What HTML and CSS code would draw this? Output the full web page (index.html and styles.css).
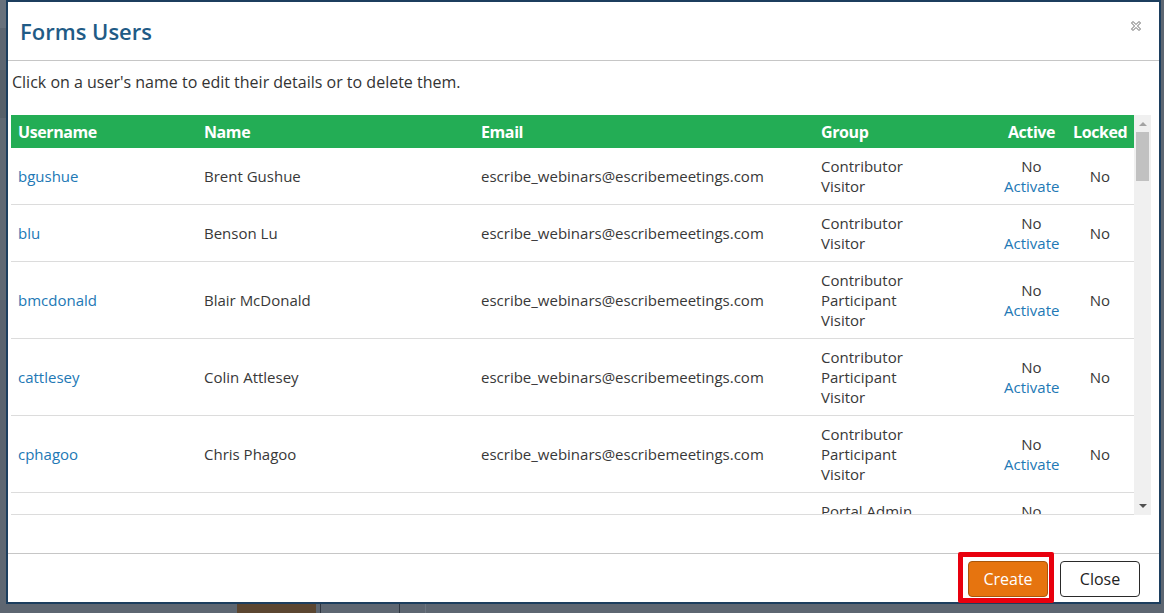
FILE: index.html
```html
<!DOCTYPE html>
<html>
<head>
	<meta charset="utf-8">
	<title>Forms Users</title>
	<link rel="stylesheet" href="styles.css">
</head>
<body>
	<div class="screen">
		<div class="stage">
			<div class="page-edge"></div>
			<section class="dialog">
				<header class="dialog-title">
					<h2>Forms Users</h2>
					<button class="close-x" title="Close">
						<svg width="12" height="12" viewBox="0 0 12 12">
							<polygon points="1.5,3 3,1.5 6,4.5 9,1.5 10.5,3 7.5,6 10.5,9 9,10.5 6,7.5 3,10.5 1.5,9 4.5,6" fill="#fff" stroke="#6a6a6a" stroke-width="1" stroke-linejoin="round"/>
						</svg>
					</button>
				</header>
				<div class="dialog-body">
					<p class="hint">Click on a user's name to edit their details or to delete them.</p>
					<div class="grid">
						<div class="grid-view">
							<table class="users">
								<colgroup>
									<col class="c-user"><col class="c-name"><col class="c-mail"><col class="c-group"><col class="c-active"><col class="c-locked">
								</colgroup>
								<thead>
									<tr>
										<th>Username</th>
										<th>Name</th>
										<th>Email</th>
										<th>Group</th>
										<th class="mid">Active</th>
										<th class="mid">Locked</th>
									</tr>
								</thead>
								<tbody>
									<tr>
										<td><a href="#">bgushue</a></td>
										<td>Brent Gushue</td>
										<td>escribe_webinars@escribemeetings.com</td>
										<td>Contributor<br>Visitor</td>
										<td class="mid">No<br><a href="#">Activate</a></td>
										<td class="mid">No</td>
									</tr>
									<tr>
										<td><a href="#">blu</a></td>
										<td>Benson Lu</td>
										<td>escribe_webinars@escribemeetings.com</td>
										<td>Contributor<br>Visitor</td>
										<td class="mid">No<br><a href="#">Activate</a></td>
										<td class="mid">No</td>
									</tr>
									<tr>
										<td><a href="#">bmcdonald</a></td>
										<td>Blair McDonald</td>
										<td>escribe_webinars@escribemeetings.com</td>
										<td>Contributor<br>Participant<br>Visitor</td>
										<td class="mid">No<br><a href="#">Activate</a></td>
										<td class="mid">No</td>
									</tr>
									<tr>
										<td><a href="#">cattlesey</a></td>
										<td>Colin Attlesey</td>
										<td>escribe_webinars@escribemeetings.com</td>
										<td>Contributor<br>Participant<br>Visitor</td>
										<td class="mid">No<br><a href="#">Activate</a></td>
										<td class="mid">No</td>
									</tr>
									<tr>
										<td><a href="#">cphagoo</a></td>
										<td>Chris Phagoo</td>
										<td>escribe_webinars@escribemeetings.com</td>
										<td>Contributor<br>Participant<br>Visitor</td>
										<td class="mid">No<br><a href="#">Activate</a></td>
										<td class="mid">No</td>
									</tr>
									<tr>
										<td></td>
										<td></td>
										<td></td>
										<td>Portal Admin<br>Visitor</td>
										<td class="mid">No<br><a href="#">Activate</a></td>
										<td class="mid"></td>
									</tr>
								</tbody>
							</table>
						</div>
						<div class="scrollbar">
							<span class="arrow up"></span>
							<span class="track"><span class="thumb"></span></span>
							<span class="arrow down"></span>
						</div>
					</div>
				</div>
				<footer class="dialog-footer">
					<button class="btn btn-create">Create<span class="callout"></span></button>
					<button class="btn btn-close">Close</button>
				</footer>
			</section>
			<div class="page-gap"></div>
		</div>
		<div class="page-foot">
			<span class="pf-a"></span>
			<span class="pf-brown"></span>
			<span class="pf-b"></span>
			<span class="pf-c"></span>
			<span class="pf-d"></span>
		</div>
	</div>
</body>
</html>
```

FILE: styles.css
```css
body {
	margin: 0;
	width: 1164px;
	height: 613px;
	overflow: hidden;
	background-color: #5d6671;
	font-family: "Open Sans", "Liberation Sans", sans-serif;
	color: #383838;
}
.screen {
	display: flex;
	flex-direction: column;
	height: 613px;
}
.stage {
	display: flex;
	height: 604px;
}
.page-edge {
	width: 6px;
	background: linear-gradient(#68717c 0 28px, #5d6671 28px 70px, #56606a 70px 118px, #5f6873 118px 300px, #5a636e 300px 480px, #5e6772 480px);
}
.page-gap {
	flex: 1;
}

/* dialog */
.dialog {
	box-sizing: border-box;
	width: 1155px;
	height: 604px;
	border: 2px solid #1c3e5e;
	background-color: #fff;
	display: flex;
	flex-direction: column;
}
.dialog-title {
	height: 58px;
	border-bottom: 1px solid #c6c6c6;
	display: flex;
	align-items: center;
	justify-content: space-between;
	padding: 0 17px 0 12px;
}
.dialog-title h2 {
	margin: 0;
	font-size: 22px;
	font-weight: 600;
	color: #1f5b86;
}
.close-x {
	border: 0;
	background: none;
	padding: 0;
	width: 12px;
	height: 12px;
	margin-top: -10px;
	cursor: pointer;
}
.close-x svg {
	display: block;
}
.dialog-body {
	flex: 1;
	padding: 0 8px 0 3px;
}
.hint {
	margin: 11px 0 23px 1px;
	font-size: 16px;
	line-height: 20px;
	color: #333;
}

/* table + scrollbar */
.grid {
	display: flex;
	height: 400px;
}
.grid-view {
	width: 1123px;
	height: 399px;
	overflow: hidden;
	border-bottom: 1px solid #dcdcdc;
}
.users {
	width: 1123px;
	table-layout: fixed;
	border-collapse: collapse;
	font-size: 15px;
	line-height: 20px;
}
.c-user { width: 186px; }
.c-name { width: 277px; }
.c-mail { width: 340px; }
.c-group { width: 183px; }
.c-active { width: 69px; }
.c-locked { width: 68px; }
.users th {
	height: 33px;
	padding: 0 7px;
	background-color: #23ad55;
	color: #fff;
	font-size: 16px;
	font-weight: 700;
	text-align: left;
	letter-spacing: -0.4px;
}
.users td {
	padding: 8px 7px;
	border-bottom: 1px solid #dcdcdc;
	vertical-align: middle;
	white-space: nowrap;
}
.users .mid {
	text-align: center;
}
.users a {
	color: #2278b5;
	text-decoration: none;
}
.scrollbar {
	width: 17px;
	background-color: #f0f0f0;
	display: flex;
	flex-direction: column;
	align-items: center;
}
.arrow {
	width: 0;
	height: 0;
	border-left: 4px solid transparent;
	border-right: 4px solid transparent;
}
.arrow.up {
	margin: 7px 0 6px;
	border-bottom: 4px solid #a3a3a3;
}
.arrow.down {
	margin: 6px 0 7px;
	border-top: 4px solid #505050;
}
.track {
	flex: 1;
	width: 13px;
}
.thumb {
	display: block;
	height: 49px;
	background-color: #c1c1c1;
}

/* footer */
.dialog-footer {
	height: 49px;
	box-sizing: border-box;
	border-top: 1px solid #c6c6c6;
	display: flex;
	justify-content: flex-end;
	align-items: flex-start;
	gap: 12px;
	padding: 7px 19px 0 0;
}
.btn {
	position: relative;
	box-sizing: border-box;
	width: 80px;
	height: 36px;
	border-radius: 4px;
	font-family: inherit;
	font-size: 16px;
	cursor: pointer;
}
.btn-create {
	background-color: #e6740f;
	border: 1px solid #a8560b;
	color: #fff;
}
.btn-close {
	background-color: #fff;
	border: 1px solid #2a2a2a;
	color: #222;
}
.callout {
	position: absolute;
	left: -11px;
	top: -10px;
	right: -7px;
	bottom: -7px;
	border: 5px solid #e8000e;
	border-radius: 2px;
	pointer-events: none;
}

/* page behind the overlay */
.page-foot {
	display: flex;
	height: 9px;
}
.pf-a { width: 237px; }
.pf-brown { width: 79px; background-color: #5b4631; }
.pf-b { width: 4px; border-right: 1px solid #2e3641; }
.pf-c { width: 78px; border-right: 1px solid #2e3641; }
.pf-d { width: 25px; border-right: 1px solid #6c7580; }
```
